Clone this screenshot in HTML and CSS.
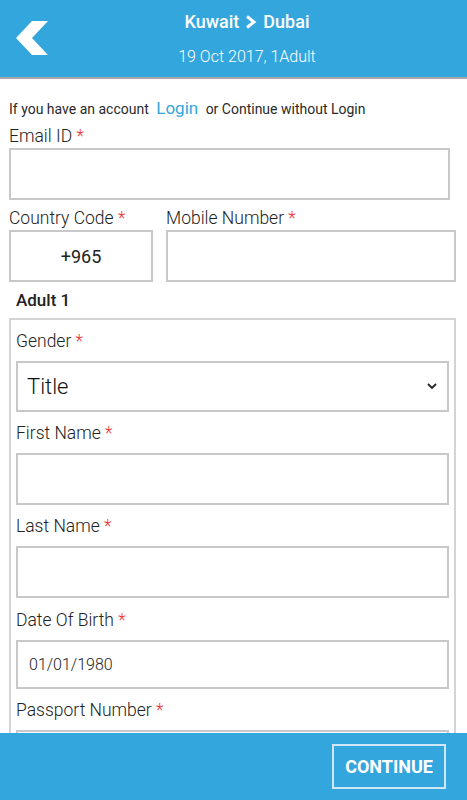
FILE: index.html
```html
<!DOCTYPE html>
<html>
<head>
<meta charset="utf-8">
<link rel="stylesheet" href="styles.css">
</head>
<body>
<header class="topbar">
  <svg class="back" width="34" height="36" viewBox="0 0 34 36"><polygon points="16,0 32,0 16,17 32,34 16,34 0,17" fill="#fff"/></svg>
  <div class="route">Kuwait <svg class="gt" width="12" height="14" viewBox="0 0 12 14"><polyline points="2,1.5 9,7 2,12.5" fill="none" stroke="#fff" stroke-width="3"/></svg> Dubai</div>
  <div class="date">19 Oct 2017, 1Adult</div>
</header>
<main class="content">
  <p class="intro">If you have an account <a class="login">Login</a> or Continue without Login</p>
  <label class="lbl lbl-email">Email ID <span class="req">*</span></label>
  <div class="box box-email"></div>
  <div class="row">
    <div class="col col-cc">
      <label class="lbl">Country Code <span class="req">*</span></label>
      <div class="box box-cc">+965</div>
    </div>
    <div class="col col-mob">
      <label class="lbl">Mobile Number <span class="req">*</span></label>
      <div class="box"></div>
    </div>
  </div>
  <h3 class="adult">Adult 1</h3>
  <section class="card">
    <label class="lbl clbl first">Gender <span class="req">*</span></label>
    <div class="box select"><span>Title</span>
      <svg width="10" height="7" viewBox="0 0 10 7"><polyline points="1,1 5,5 9,1" fill="none" stroke="#222" stroke-width="1.8"/></svg>
    </div>
    <label class="lbl clbl">First Name <span class="req">*</span></label>
    <div class="box cbox"></div>
    <label class="lbl clbl">Last Name <span class="req">*</span></label>
    <div class="box cbox"></div>
    <label class="lbl clbl dobl">Date Of Birth <span class="req">*</span></label>
    <div class="box cbox dob">01/01/1980</div>
    <label class="lbl clbl">Passport Number <span class="req">*</span></label>
    <div class="box cbox"></div>
  </section>
</main>
<footer class="bottombar">
  <button class="continue">CONTINUE</button>
</footer>
</body>
</html>
```
FILE: styles.css
```css
* { box-sizing: border-box; }
html, body { height: 100%; }
body {
  margin: 0;
  font-family: Roboto, "Open Sans", sans-serif;
  color: #222;
  background: #fff;
  overflow: hidden;
}
.topbar {
  position: relative;
  height: 79px;
  background: #33a6de;
  border-bottom: 2px solid #a8a8a8;
  color: #fff;
  text-align: center;
  padding-top: 10px;
  padding-left: 27px;
}
.back {
  position: absolute;
  left: 16px;
  top: 21px;
}
.route {
  font-size: 18px;
  font-weight: 500;
  line-height: 24px;
  display: flex;
  justify-content: center;
  align-items: center;
  gap: 6px;
}
.date {
  font-size: 16px;
  line-height: 22px;
  margin-top: 12px;
  font-weight: 300;
}
.content {
  padding: 0 11px 0 9px;
  height: 721px;
  overflow: hidden;
}
.intro {
  margin: 18px 0 0;
  font-size: 14px;
  line-height: 22px;
  color: #2a2a2a;
}
.login {
  color: #33a6de;
  font-size: 17px;
  margin: 0 4px;
}
.lbl {
  display: block;
  font-size: 17.5px;
  line-height: 20px;
  color: #222;
  font-weight: 300;
}
.req { color: #e33; }
.lbl-email { margin-top: 6px; }
.box {
  border: 2px solid #c8c8c8;
  height: 52px;
  background: #fff;
}
.box-email {
  margin-top: 2px;
  width: 441px;
}
.row {
  display: flex;
  gap: 13px;
  margin-top: 8px;
}
.col .box { margin-top: 2px; }
.col-cc { width: 144px; }
.col-mob { width: 290px; }
.col .lbl { white-space: nowrap; }
.box-cc {
  display: flex;
  align-items: center;
  justify-content: center;
  font-size: 18px;
}
.adult {
  margin: 8px 0 0 7px;
  font-size: 17px;
  line-height: 20px;
  font-weight: 500;
}
.card {
  margin-top: 8px;
  border: 2px solid #d4d4d4;
  border-bottom: none;
  padding: 0 5px 0 5px;
  width: 447px;
  height: 500px;
}
.clbl { margin-top: 11px; margin-bottom: 10px; }
.clbl.dobl { margin-top: 12px; }
.select {
  height: 51px;
  display: flex;
  align-items: center;
  justify-content: space-between;
  padding: 0 10px 0 9px;
  font-size: 22px;
  font-weight: 300;
  color: #111;
}
.cbox { height: 52px; }
.dob {
  height: 49px;
  display: flex;
  align-items: center;
  padding-left: 11px;
  font-size: 16px;
  font-weight: 300;
}
.bottombar {
  position: fixed;
  left: 0;
  right: 0;
  bottom: 0;
  height: 67px;
  background: #33a6de;
  display: flex;
  justify-content: flex-end;
  align-items: flex-start;
  padding: 11px 21px 0 0;
}
.continue {
  width: 114px;
  height: 45px;
  background: transparent;
  border: 2px solid #cfe6f4;
  color: #fff;
  font-family: Roboto, sans-serif;
  font-weight: 700;
  font-size: 18px;
  padding: 0;
}
```
